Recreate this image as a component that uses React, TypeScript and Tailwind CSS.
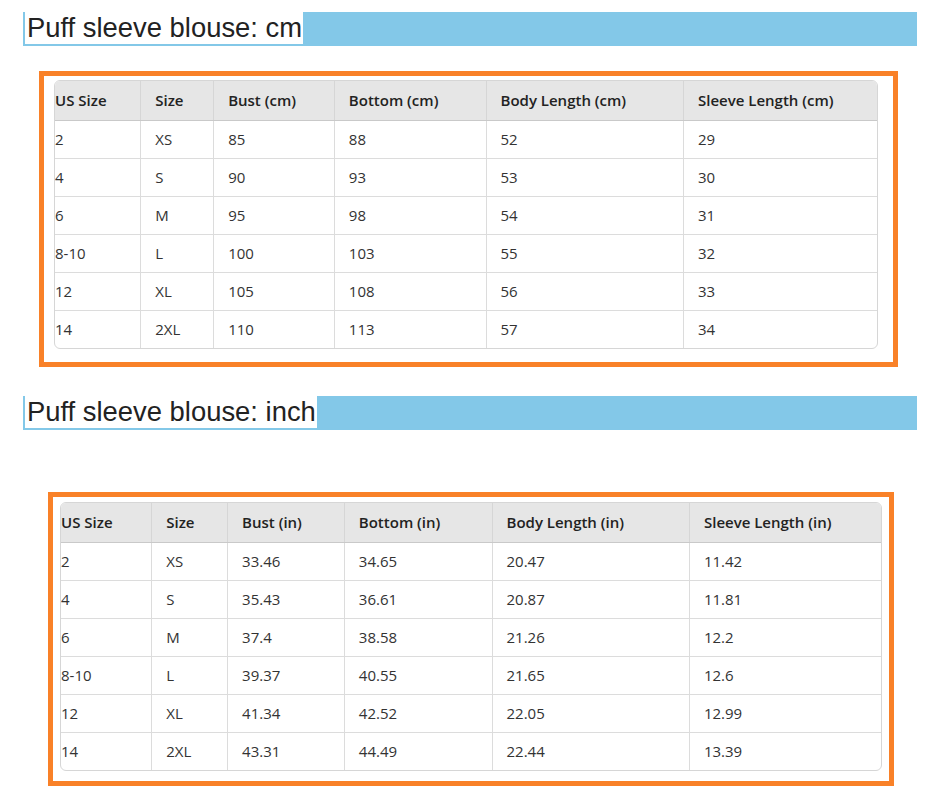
import React, { ReactElement } from 'react';

type SizeTable = {
	unit: string;
	rows: string[][];
	widths: string[];
};

const cmTable: SizeTable = {
	unit: 'cm',
	widths: ['w-[86px]', 'w-[73px]', 'w-[121px]', 'w-[152px]', 'w-[198px]', 'w-[194px]'],
	rows: [
		['2', 'XS', '85', '88', '52', '29'],
		['4', 'S', '90', '93', '53', '30'],
		['6', 'M', '95', '98', '54', '31'],
		['8-10', 'L', '100', '103', '55', '32'],
		['12', 'XL', '105', '108', '56', '33'],
		['14', '2XL', '110', '113', '57', '34'],
	],
};

const inchTable: SizeTable = {
	unit: 'in',
	widths: ['w-[91px]', 'w-[76px]', 'w-[117px]', 'w-[148px]', 'w-[198px]', 'w-[192px]'],
	rows: [
		['2', 'XS', '33.46', '34.65', '20.47', '11.42'],
		['4', 'S', '35.43', '36.61', '20.87', '11.81'],
		['6', 'M', '37.4', '38.58', '21.26', '12.2'],
		['8-10', 'L', '39.37', '40.55', '21.65', '12.6'],
		['12', 'XL', '41.34', '42.52', '22.05', '12.99'],
		['14', '2XL', '43.31', '44.49', '22.44', '13.39'],
	],
};

function Heading({ title }: { title: string }): ReactElement {
	return (
		<div className="flex h-[34px] bg-[#83c8e8] pl-[2px] pb-[2px]">
			<span className="bg-white pl-[2px] pr-[1px] text-[27.4px] leading-[32px] text-[#222] font-['Liberation_Sans',Arial,sans-serif]">
				{title}
			</span>
		</div>
	);
}

function ChartTable({ data }: { data: SizeTable }): ReactElement {
	const headers = [
		'US Size',
		'Size',
		`Bust (${data.unit})`,
		`Bottom (${data.unit})`,
		`Body Length (${data.unit})`,
		`Sleeve Length (${data.unit})`,
	];

	return (
		<div className="rounded-[6px] border border-[#d6d6d6] overflow-hidden font-['Open_Sans',sans-serif] text-[15px] text-[#333]">
			<table className="border-collapse table-fixed">
				<thead>
					<tr className="h-[39px] bg-[#e6e6e6]">
						{headers.map((h, i) => (
							<th
								key={h}
								className={`${data.widths[i]} text-left font-semibold text-[#222] border-b border-[#c9c9c9] ${i === 0 ? 'pl-0' : 'pl-[14px] border-l'} border-l-[#d6d6d6]`}
							>
								{h}
							</th>
						))}
					</tr>
				</thead>
				<tbody>
					{data.rows.map((row, r) => (
						<tr key={r} className={`h-[38px] ${r > 0 ? 'border-t border-[#dcdcdc]' : ''}`}>
							{row.map((cell, i) => (
								<td
									key={i}
									className={`${i === 0 ? 'pl-0' : 'pl-[14px] border-l border-[#dcdcdc]'}`}
								>
									{cell}
								</td>
							))}
						</tr>
					))}
				</tbody>
			</table>
		</div>
	);
}

export default function App(): ReactElement {
	return (
		<div className="w-[939px] h-[801px] bg-white pt-[12px]">
			<div className="ml-[23px] w-[894px]">
				<Heading title="Puff sleeve blouse: cm" />
			</div>

			<div className="mt-[25px] ml-[39px] w-[859px] border-[5px] border-[#f98128] pt-[4px] pl-[10px] pr-[15px] pb-[13px]">
				<ChartTable data={cmTable} />
			</div>

			<div className="mt-[29px] ml-[23px] w-[894px]">
				<Heading title="Puff sleeve blouse: inch" />
			</div>

			<div className="mt-[62px] ml-[48px] w-[846px] border-[5px] border-[#f98128] pt-[5px] pl-[7px] pr-[7px] pb-[10px]">
				<ChartTable data={inchTable} />
			</div>
		</div>
	);
}
